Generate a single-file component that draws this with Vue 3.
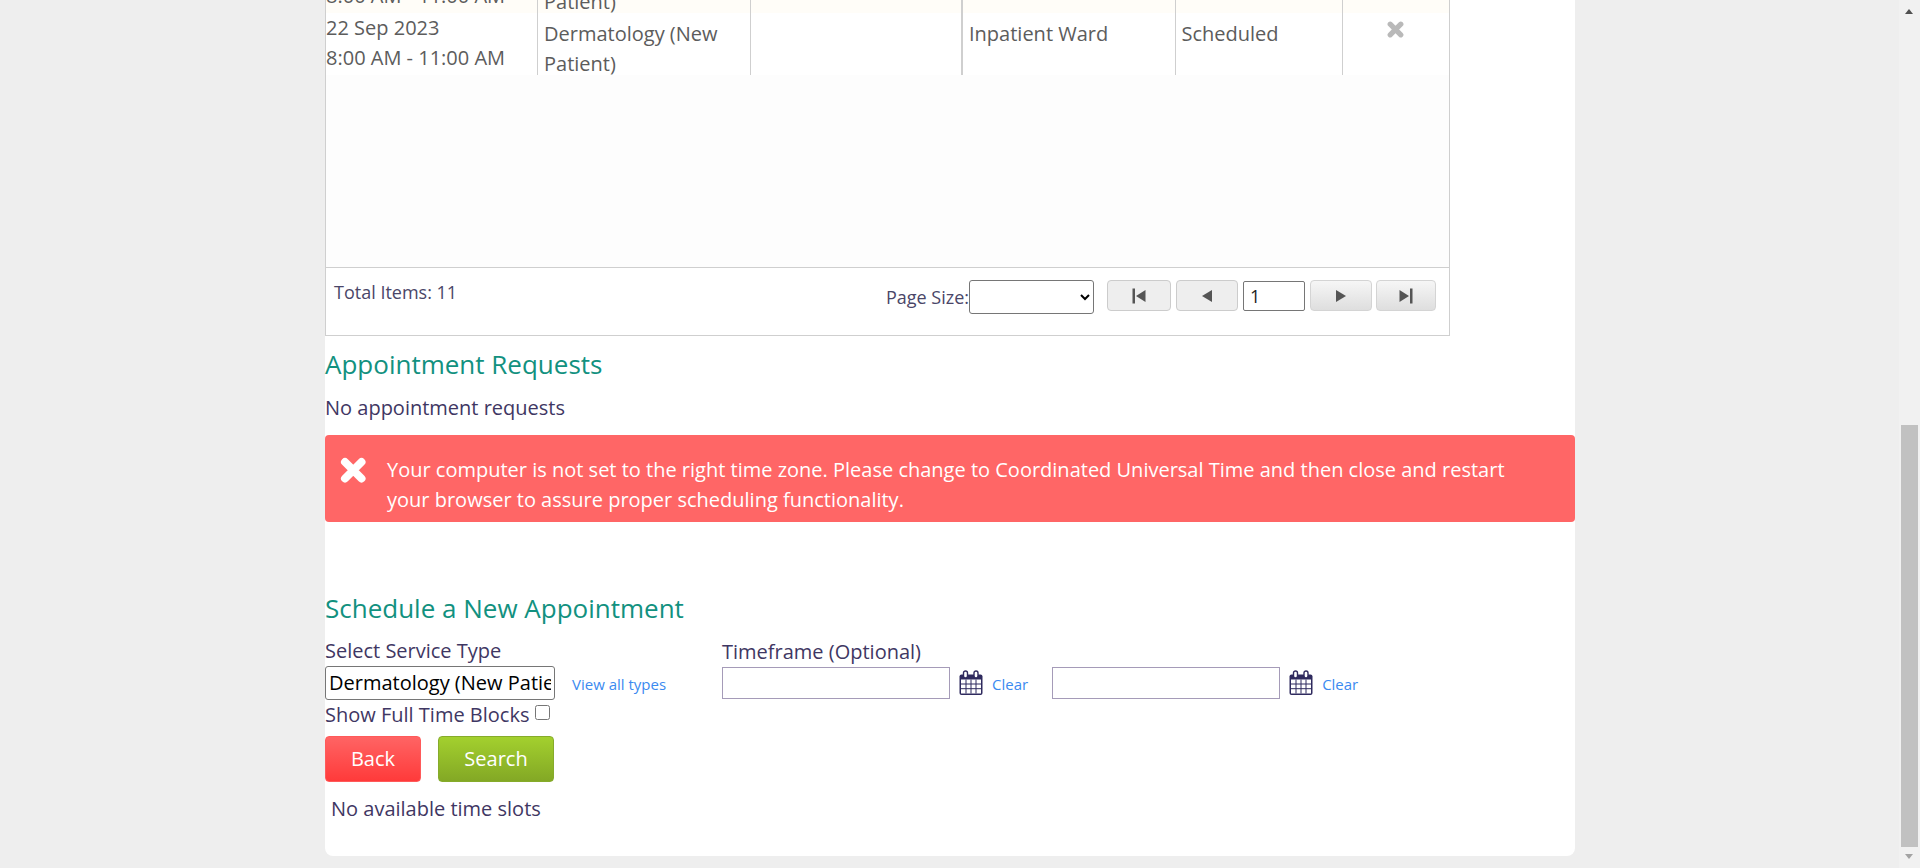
<template>
  <div class="viewport">
    <div class="page">
      <div class="content">
        <div class="grid-panel">
          <div v-for="(row, i) in rows" :key="i" class="row" :class="{ alt: i === 0 }">
            <div class="cell time">{{ row.date }}<br>{{ row.time }}</div>
            <div class="cell wide">{{ row.service }}</div>
            <div class="cell thick"></div>
            <div class="cell wide">{{ row.location }}</div>
            <div class="cell status">{{ row.status }}</div>
            <div class="cell remove">
              <svg width="17" height="17" viewBox="0 0 17 17">
                <path d="M3.2 3.2 13.8 13.8M13.8 3.2 3.2 13.8" stroke="#b9b9b9" stroke-width="5.2" stroke-linecap="round" fill="none" />
              </svg>
            </div>
          </div>
          <div class="filler"></div>
          <div class="pager">
            <span class="total">Total Items: 11</span>
            <div class="pager-right">
              <label class="page-size">Page Size:</label>
              <select class="size-select"></select>
              <button class="pg first" disabled>
                <svg width="16" height="16" viewBox="0 0 16 16"><path d="M1.5 .5h2.5v15H1.5zM14.5 2v12L5 8z" fill="#555" /></svg>
              </button>
              <button class="pg prev" disabled>
                <svg width="12" height="16" viewBox="0 0 12 16"><path d="M11 2v12L1 8z" fill="#555" /></svg>
              </button>
              <input class="page-input" type="text" value="1">
              <button class="pg next">
                <svg width="12" height="16" viewBox="0 0 12 16"><path d="M1 2v12l10-6z" fill="#555" /></svg>
              </button>
              <button class="pg last">
                <svg width="16" height="16" viewBox="0 0 16 16"><path d="M1.5 2v12L11 8zM12 .5h2.5v15H12z" fill="#555" /></svg>
              </button>
            </div>
          </div>
        </div>

        <h2 class="heading">Appointment Requests</h2>
        <p class="none">No appointment requests</p>

        <div class="alert">
          <svg class="alert-x" width="28" height="28" viewBox="0 0 28 28">
            <path d="M6 6 22.5 22.5M22.5 6 6 22.5" stroke="#fff" stroke-width="8" stroke-linecap="round" fill="none" />
          </svg>
          <p class="alert-text">Your computer is not set to the right time zone. Please change to Coordinated Universal Time and then close and restart your browser to assure proper scheduling functionality.</p>
        </div>

        <h2 class="heading schedule-title">Schedule a New Appointment</h2>

        <div class="schedule">
          <div class="service">
            <div class="field-label">Select Service Type</div>
            <div class="service-line">
              <input class="service-input" type="text" value="Dermatology (New Patient)">
              <a class="link view-all">View all types</a>
            </div>
            <div class="full-blocks">
              <span>Show Full Time Blocks</span>
              <input class="check" type="checkbox">
            </div>
            <div class="actions">
              <button class="btn back">Back</button>
              <button class="btn search">Search</button>
            </div>
          </div>
          <div class="timeframe">
            <div class="field-label">Timeframe (Optional)</div>
            <div class="dates">
              <div v-for="n in 2" :key="n" class="date">
                <input class="date-input" type="text">
                <svg class="cal" width="24" height="26" viewBox="0 0 24 26">
                  <rect x="0.5" y="4.5" width="23" height="20.5" rx="2" fill="#2f2a5e" />
                  <rect x="2" y="9.5" width="20" height="14" fill="#fff" />
                  <path d="M7 9.5v14M12 9.5v14M17 9.5v14M2 14h20M2 18.7h20" stroke="#2f2a5e" stroke-width="1" fill="none" />
                  <rect x="4.5" y="1" width="4" height="7" rx="2" fill="#fff" stroke="#2f2a5e" stroke-width="1.4" />
                  <rect x="15" y="1" width="4" height="7" rx="2" fill="#fff" stroke="#2f2a5e" stroke-width="1.4" />
                </svg>
                <a class="link clear">Clear</a>
              </div>
            </div>
          </div>
        </div>

        <p class="slots">No available time slots</p>
      </div>
    </div>
    <div class="scrollbar">
      <span class="arrow up"></span>
      <div class="thumb"></div>
      <span class="arrow down"></span>
    </div>
  </div>
</template>

<script setup>
const rows = [
  { date: '\u00a0', time: '8:00 AM - 11:00 AM', service: 'Dermatology (New Patient)', location: 'Inpatient Ward', status: 'Scheduled' },
  { date: '22 Sep 2023', time: '8:00 AM - 11:00 AM', service: 'Dermatology (New Patient)', location: 'Inpatient Ward', status: 'Scheduled' }
]
</script>

<style>
html, body {
  margin: 0;
  height: 100%;
  overflow: hidden;
}
</style>

<style scoped>
.viewport {
  display: flex;
  height: 868px;
  background: #eeeeee;
  font-family: "Open Sans", sans-serif;
  font-size: 20px;
  color: #3f3763;
  overflow: hidden;
}

.page {
  flex: 1;
  display: flex;
  flex-direction: column;
  justify-content: flex-end;
  padding-bottom: 12px;
  overflow: hidden;
}

.content {
  width: 1250px;
  margin-left: 325px;
  background: #fff;
  border-radius: 0 0 8px 8px;
  flex-shrink: 0;
}

.grid-panel {
  width: 1123px;
  border: 1px solid #cfcfcf;
  border-top: none;
  background: #fdfdfd;
}

.row {
  display: flex;
  height: 62px;
  background: #fff;
  color: #5c5c5c;
  line-height: 30px;
}

.row.alt {
  background: #fffdf8;
}

.cell {
  box-sizing: border-box;
  width: 212.5px;
  padding: 6px 6px 0;
  border-right: 1px solid #cfcfcf;
}

.cell.time {
  width: 212px;
  padding: 0;
}

.cell.thick {
  border-right-width: 2px;
}

.cell.status {
  width: 167px;
}

.cell.remove {
  flex: 1;
  border-right: none;
  text-align: center;
  padding: 0;
}

.cell.remove svg {
  display: block;
  margin: 8px auto 0;
}

.filler {
  height: 192px;
  background: #fdfdfd;
}

.pager {
  display: flex;
  justify-content: space-between;
  height: 68px;
  box-sizing: border-box;
  border-top: 1px solid #cfcfcf;
  background: #fff;
  font-size: 18px;
  color: #4a4668;
}

.total {
  margin: 12px 0 0 8px;
}

.pager-right {
  display: flex;
  align-items: flex-start;
  padding: 12px 13px 0 0;
}

.page-size {
  margin-top: 5px;
}

.size-select {
  width: 125px;
  height: 34px;
  margin-right: 13px;
  font-size: 18px;
  background: #fff;
  border: 1px solid #767676;
  border-radius: 3px;
}

.pg {
  width: 62px;
  height: 31px;
  margin-right: 5px;
  padding: 0;
  display: flex;
  align-items: center;
  justify-content: center;
  border: 1px solid #d4d4d4;
  border-radius: 4px;
  background: linear-gradient(#f6f6f6, #dedede);
}

.pg.first,
.pg.prev {
  background: #eeeeee;
  border-color: #cccccc;
}

.pg.first {
  width: 64px;
}

.pg.last {
  width: 60px;
  margin-right: 0;
  margin-left: -1px;
}

.page-input {
  box-sizing: border-box;
  width: 62px;
  height: 30px;
  margin: 1px 5px 0 0;
  padding: 0 6px;
  border: 1px solid #767676;
  border-radius: 2px;
  font-family: "Open Sans", sans-serif;
  font-size: 18px;
  color: #222;
}

.heading {
  margin: 0;
  font-size: 26px;
  font-weight: 400;
  line-height: 36px;
  color: #12917f;
}

.grid-panel + .heading {
  margin-top: 10px;
}

.none {
  margin: 0;
  line-height: 30px;
  padding-top: 11px;
}

.alert {
  display: flex;
  align-items: flex-start;
  box-sizing: border-box;
  height: 87px;
  margin-top: 12px;
  padding: 20px 40px 0 14px;
  background: #ff6666;
  border-radius: 4px;
  color: #fff;
}

.alert-x {
  flex-shrink: 0;
  margin: 1px 20px 0 0;
}

.alert-text {
  margin: 0;
  line-height: 30px;
  width: 1140px;
}

.schedule-title {
  margin-top: 68px;
}

.schedule {
  display: flex;
  margin-top: 13px;
}

.service {
  width: 397px;
}

.field-label {
  line-height: 24px;
  height: 27px;
}

.timeframe .field-label {
  line-height: 26px;
}

.service-line {
  display: flex;
  align-items: center;
}

.service-input {
  box-sizing: border-box;
  width: 230px;
  height: 34px;
  padding: 0 3px 2px;
  border: 1px solid #767676;
  border-radius: 3px;
  font-family: "Open Sans", sans-serif;
  font-size: 20px;
  color: #000;
}

.link {
  color: #3b8af0;
  font-size: 15px;
}

.view-all {
  margin-left: 17px;
  padding-top: 1px;
}

.full-blocks {
  display: flex;
  align-items: center;
  height: 30px;
  padding-bottom: 2px;
  box-sizing: border-box;
}

.check {
  width: 15px;
  height: 15px;
  margin: 0 0 3px 6px;
}

.actions {
  display: flex;
  gap: 17px;
  margin-top: 6px;
}

.btn {
  height: 46px;
  border-radius: 4px;
  font-family: "Open Sans", sans-serif;
  font-size: 20px;
  color: #fff;
  padding: 0 0 2px;
}

.back {
  width: 96px;
  border: 1px solid #ff5a5a;
  background: linear-gradient(#ff6464, #ff3a3a);
}

.search {
  width: 116px;
  border: 1px solid #86ab2b;
  background: linear-gradient(#a3d02e, #83a825);
}

.dates {
  display: flex;
  gap: 24px;
}

.date {
  display: flex;
  align-items: center;
  height: 34px;
}

.date-input {
  box-sizing: border-box;
  width: 228px;
  height: 32px;
  border: 1px solid #a59bb8;
  background: #fff;
}

.cal {
  margin: 0 9px 0 9px;
}

.clear {
  padding-top: 1px;
}

.slots {
  margin: 0;
  padding: 12px 0 32px 6px;
  line-height: 30px;
}

.scrollbar {
  position: relative;
  width: 21px;
  background: #f1f1f1;
  flex-shrink: 0;
}

.thumb {
  position: absolute;
  left: 2px;
  right: 2px;
  top: 425px;
  height: 422px;
  background: #c1c1c1;
}

.arrow {
  position: absolute;
  left: 6px;
  width: 0;
  height: 0;
  border-left: 4.5px solid transparent;
  border-right: 4.5px solid transparent;
}

.arrow.up {
  top: 9px;
  border-bottom: 5px solid #505050;
}

.arrow.down {
  bottom: 9px;
  border-top: 5px solid #a3a3a3;
}
</style>
